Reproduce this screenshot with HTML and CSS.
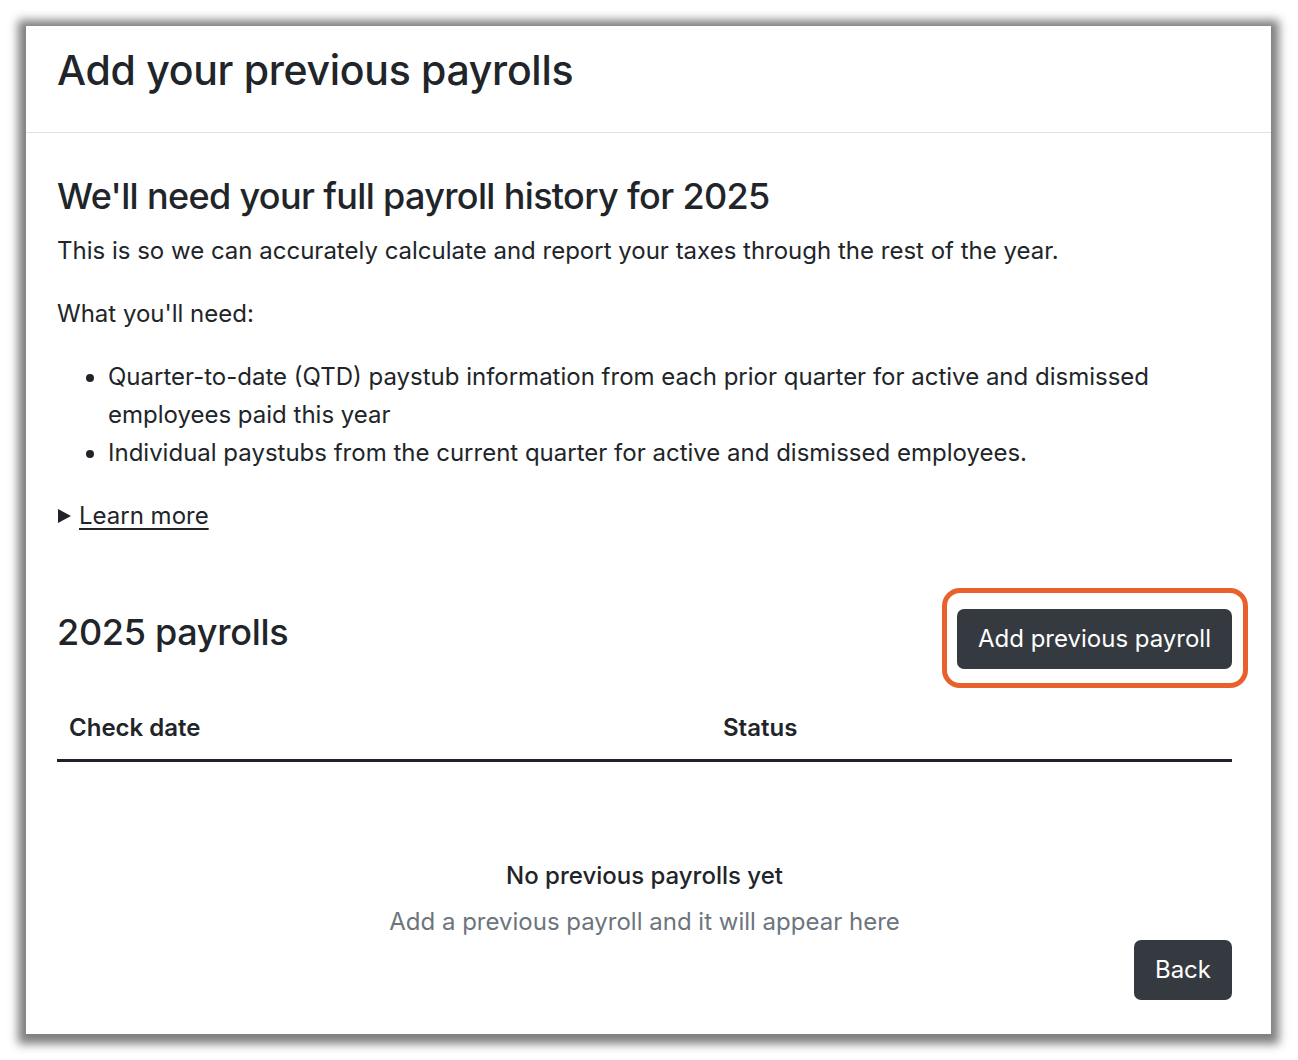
FILE: index.html
```html
<!DOCTYPE html>
<html lang="en">
  <head>
    <meta charset="UTF-8" />
    <meta name="viewport" content="width=device-width, initial-scale=1.0" />
    <title>Add your previous payrolls</title>
    <link rel="stylesheet" href="styles.css">
  </head>
  <body>
    <div class="card">
      <div class="card-header">
        <h1>Add your previous payrolls</h1>
      </div>

      <div class="card-body">
        <h2 class="intro-title">We'll need your full payroll history for 2025</h2>
        <p>
          This is so we can accurately calculate and report your taxes through
          the rest of the year.
        </p>
        <p>What you'll need:</p>
        <ul class="needs">
          <li>
            Quarter-to-date (QTD) paystub information from each prior quarter
            for active and dismissed employees paid this year
          </li>
          <li>
            Individual paystubs from the current quarter for active and
            dismissed employees.
          </li>
        </ul>

        <details class="learn-more">
          <summary><span class="caret"></span><span class="link">Learn more</span></summary>
        </details>

        <div class="section-head">
          <h2>2025 payrolls</h2>
          <div class="highlight-wrap">
            <button class="btn">Add previous payroll</button>
            <span class="highlight"></span>
          </div>
        </div>

        <table class="payrolls">
          <thead>
            <tr>
              <th class="col-date">Check date</th>
              <th>Status</th>
            </tr>
          </thead>
        </table>

        <div class="empty">
          <div class="empty-title">No previous payrolls yet</div>
          <div class="empty-text">Add a previous payroll and it will appear here</div>
        </div>

        <div class="actions">
          <button class="btn">Back</button>
        </div>
      </div>
    </div>
  </body>
</html>
```

FILE: styles.css
```css
* {
  box-sizing: border-box;
  margin: 0;
  padding: 0;
}

body {
  font-family: Inter, "Noto Sans", Arial, sans-serif;
  font-size: 24px;
  line-height: 38px;
  color: #212529;
  background-color: #ffffff;
  padding: 26px 27px 25px 26px;
}

.card {
  background-color: white;
  box-shadow: 0 2px 9px 8px rgba(0, 0, 0, 0.5);
}

.card-header {
  padding: 20px 32px 38px 31px;
  border-bottom: 1px solid #dfe2e5;
}

h1 {
  font-size: 41px;
  line-height: 48px;
  font-weight: 500;
  letter-spacing: -0.3px;
}

h2 {
  font-size: 36px;
  line-height: 43px;
  font-weight: 500;
  letter-spacing: -0.3px;
}

.card-body {
  padding: 42px 39px 34px 31px;
}

.intro-title {
  margin-bottom: 14px;
  letter-spacing: -0.65px;
}

p {
  margin-bottom: 25px;
}

.needs {
  padding-left: 51px;
  margin-bottom: 25px;
}

.learn-more summary {
  list-style: none;
  display: flex;
  align-items: center;
  cursor: pointer;
  padding-left: 1px;
}

.learn-more summary::-webkit-details-marker {
  display: none;
}

.caret {
  width: 0;
  height: 0;
  border-left: 13px solid #212529;
  border-top: 7.5px solid transparent;
  border-bottom: 7.5px solid transparent;
  margin-right: 8px;
}

.link {
  text-decoration: underline;
  text-underline-offset: 4px;
}

.section-head {
  display: flex;
  justify-content: space-between;
  align-items: flex-start;
  margin-top: 74px;
}

.section-head h2 {
  padding-top: 2px;
}

.highlight-wrap {
  position: relative;
}

.highlight {
  position: absolute;
  top: -21px;
  bottom: -19px;
  left: -15px;
  right: -16px;
  border: 5px solid #e8602c;
  border-radius: 18px;
  pointer-events: none;
}

.btn {
  background-color: #343a40;
  color: white;
  font-family: inherit;
  font-size: 24px;
  line-height: 36px;
  padding: 12px 21px;
  border: none;
  border-radius: 7px;
  cursor: pointer;
  display: block;
}

.btn:hover {
  background-color: #23272b;
}

.payrolls {
  width: 100%;
  border-collapse: collapse;
  margin-top: 29px;
}

.payrolls th {
  text-align: left;
  font-weight: 600;
  padding: 12px 12px 13px;
  line-height: 36px;
  border-bottom: 3px solid #1f2228;
}

.col-date {
  width: 654px;
}

.empty {
  text-align: center;
  padding-top: 96px;
}

.empty-title {
  font-weight: 500;
  line-height: 36px;
  margin-bottom: 10px;
}

.empty-text {
  color: #6c757d;
  line-height: 36px;
}

.actions {
  display: flex;
  justify-content: flex-end;
  margin-top: 0;
}
```
